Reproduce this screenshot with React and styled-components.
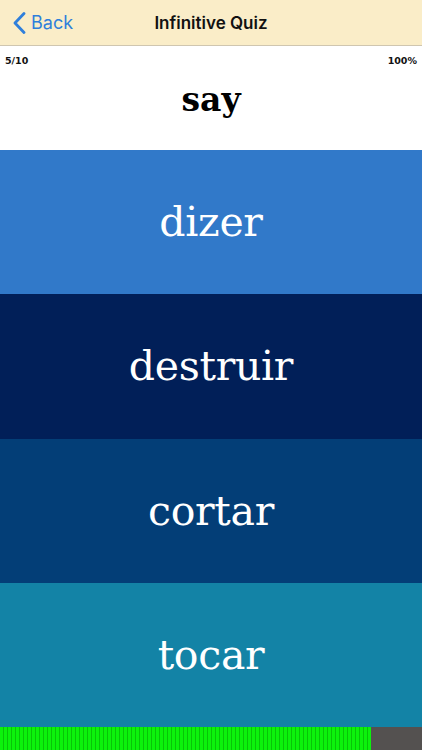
import React from 'react';
import styled, { createGlobalStyle } from 'styled-components';

const GlobalStyle = createGlobalStyle`
  html, body {
    margin: 0;
    padding: 0;
    height: 100%;
  }
  #root {
    height: 100%;
  }
  body {
    font-family: Inter, "Liberation Sans", sans-serif;
  }
`;

const Screen = styled.div`
  display: flex;
  flex-direction: column;
  width: 422px;
  height: 750px;
  overflow: hidden;
  background: #fff;
`;

const NavBar = styled.header`
  display: grid;
  grid-template-columns: 1fr auto 1fr;
  align-items: center;
  height: 46px;
  flex-shrink: 0;
  background: #faedc8;
  border-bottom: 1px solid #cfc6b0;
  padding: 0 13px;
  box-sizing: border-box;
`;

const BackButton = styled.button`
  display: flex;
  align-items: center;
  gap: 5px;
  justify-self: start;
  background: none;
  border: none;
  padding: 0;
  color: #2f7fdb;
  font-family: Inter, "Liberation Sans", sans-serif;
  font-size: 18px;
  cursor: pointer;
`;

const Title = styled.h1`
  margin: 0;
  font-size: 17px;
  font-weight: 600;
  color: #111;
`;

const Prompt = styled.section`
  display: flex;
  flex-direction: column;
  height: 104px;
  flex-shrink: 0;
  padding: 9px 5px 0;
  box-sizing: border-box;
`;

const Stats = styled.div`
  display: flex;
  justify-content: space-between;
  font-family: "DejaVu Sans", sans-serif;
  font-size: 9.5px;
  font-weight: 700;
  color: #111;
`;

const Word = styled.div`
  text-align: center;
  margin-top: 14px;
  font-family: "DejaVu Serif", serif;
  font-size: 33px;
  font-weight: 700;
  color: #000;
`;

const Answers = styled.div`
  display: flex;
  flex-direction: column;
  flex: 1;
`;

const Answer = styled.button`
  flex: 1;
  display: flex;
  align-items: center;
  justify-content: center;
  border: none;
  margin: 0;
  padding: 0;
  background: ${(p) => p.$bg};
  color: #fff;
  font-family: "DejaVu Serif", serif;
  font-size: 41px;
  letter-spacing: -0.3px;
  cursor: pointer;
`;

const Progress = styled.div`
  display: flex;
  height: 23px;
  flex-shrink: 0;
  background: #545150;
`;

const Fill = styled.div`
  height: 100%;
  background: repeating-linear-gradient(
    90deg,
    #0cf20c 0px,
    #0cf20c 3px,
    #07c407 3px,
    #07c407 4px
  );
`;

const answers = [
  { text: 'dizer', bg: '#3179c9' },
  { text: 'destruir', bg: '#011f58' },
  { text: 'cortar', bg: '#033e77' },
  { text: 'tocar', bg: '#1383a6' },
];

export default function App() {
  return (
    <>
      <GlobalStyle />
      <Screen>
        <NavBar>
          <BackButton>
            <svg width="13" height="22" viewBox="0 0 13 22">
              <path d="M11 1.5 L2 11 L11 20.5" fill="none" stroke="#2f7fdb" strokeWidth="2.8" strokeLinecap="round" strokeLinejoin="round" />
            </svg>
            Back
          </BackButton>
          <Title>Infinitive Quiz</Title>
          <span />
        </NavBar>
        <Prompt>
          <Stats>
            <span>5/10</span>
            <span>100%</span>
          </Stats>
          <Word>say</Word>
        </Prompt>
        <Answers>
          {answers.map((a) => (
            <Answer key={a.text} $bg={a.bg}>
              {a.text}
            </Answer>
          ))}
        </Answers>
        <Progress>
          <Fill style={{ width: `${(371 / 422) * 100}%` }} />
        </Progress>
      </Screen>
    </>
  );
}
